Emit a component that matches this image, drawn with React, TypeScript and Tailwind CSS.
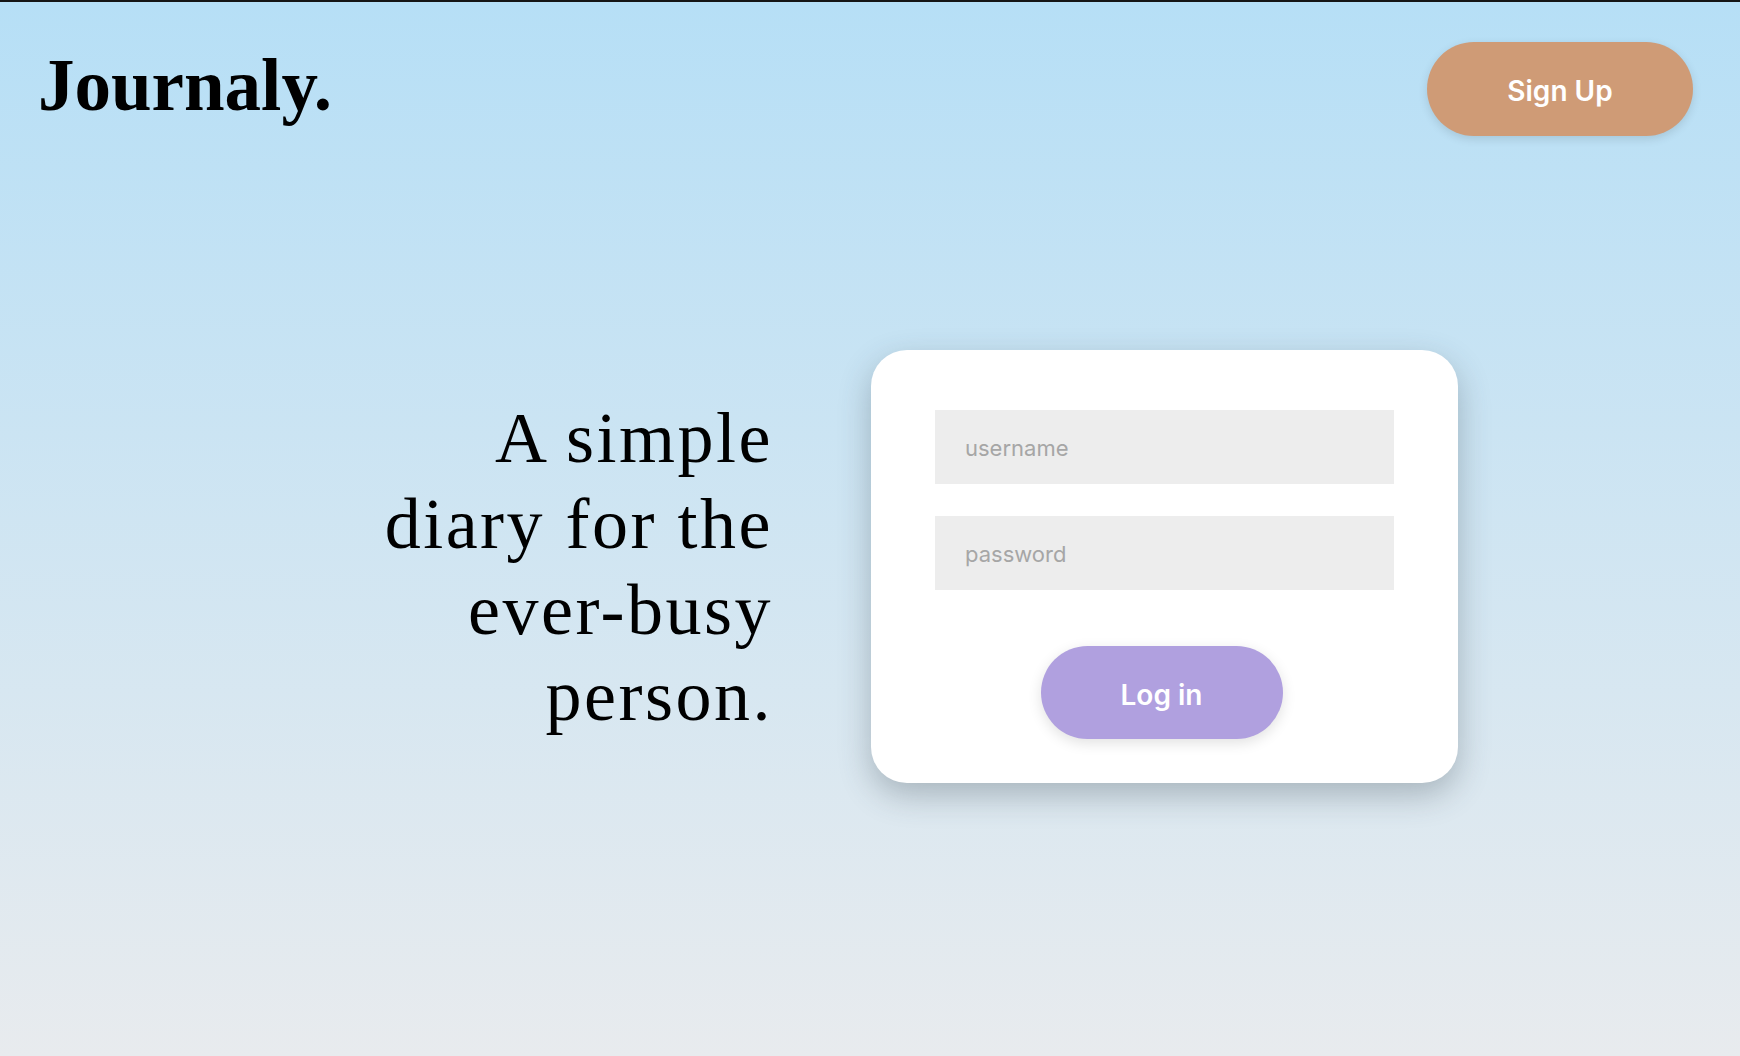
import React from "react";

export default function App() {
  return (
    <div className="min-h-screen w-full border-t-2 border-[#151515] bg-gradient-to-b from-[#b6dff6] to-[#e8ebee] flex flex-col">
      <header className="flex items-start justify-between pt-[40px] pl-[38px] pr-[47px]">
        <h1
          className="mt-[9px] text-[73px] leading-[70px] font-bold text-black"
          style={{ fontFamily: '"Liberation Serif", serif' }}
        >
          Journaly.
        </h1>
        <button
          className="w-[266px] h-[94px] pt-[4px] rounded-full bg-[#cf9b76] text-white text-[28px] font-semibold shadow-[0_3px_10px_rgba(0,0,0,0.12)]"
          style={{ fontFamily: 'Inter, "Noto Sans", sans-serif' }}
        >
          Sign Up
        </button>
      </header>

      <main className="mt-[214px] flex items-center justify-center gap-[104px]">
        <div className="w-[485px] text-right">
          <p
            className="-mr-[6px] text-[72px] leading-[86px] tracking-[2.5px] text-black"
            style={{ fontFamily: '"Liberation Serif", serif' }}
          >
            A simple
            <br />
            diary for the
            <br />
            ever-busy
            <br />
            person.
          </p>
        </div>

        <div
          className="w-[587px] h-[433px] bg-white rounded-[36px] shadow-[0_12px_32px_rgba(60,70,80,0.32)] pt-[60px] px-[64px] flex flex-col"
          style={{ fontFamily: 'Inter, "Noto Sans", sans-serif' }}
        >
          <input
            type="text"
            placeholder="username"
            className="w-full h-[74px] bg-[#ededed] pl-[30px] pt-[2px] text-[22px] text-[#333] placeholder:text-[#a6a6a6] outline-none"
          />
          <input
            type="password"
            placeholder="password"
            className="mt-[32px] w-full h-[74px] bg-[#ededed] pl-[30px] pt-[2px] text-[22px] text-[#333] placeholder:text-[#a6a6a6] outline-none"
          />
          <div className="mt-[56px] flex justify-center">
            <button className="mr-[6px] w-[242px] h-[93px] pt-[5px] rounded-full bg-[#b0a0df] text-white text-[28px] font-semibold shadow-[0_4px_14px_rgba(0,0,0,0.12)]">
              Log in
            </button>
          </div>
        </div>
      </main>
    </div>
  );
}
